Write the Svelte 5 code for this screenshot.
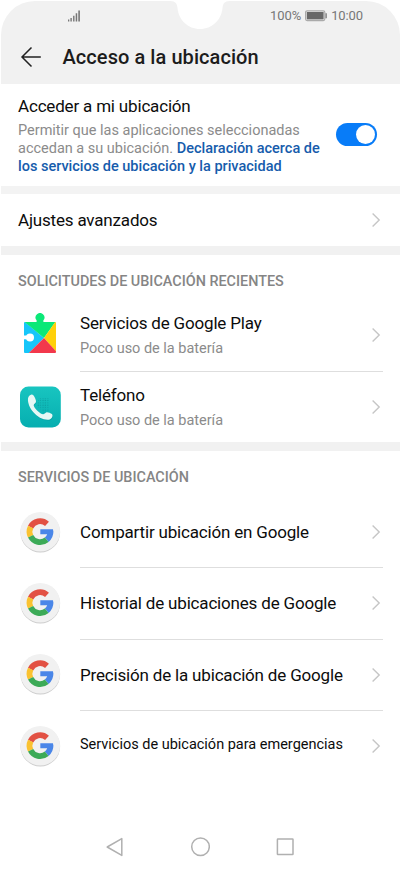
<script lang="ts">
	interface Item {
		title: string;
		note?: string;
		icon: 'play' | 'phone' | 'google';
		small?: boolean;
	}

	const recent: Item[] = [
		{ title: 'Servicios de Google Play', note: 'Poco uso de la batería', icon: 'play' },
		{ title: 'Teléfono', note: 'Poco uso de la batería', icon: 'phone' }
	];

	const services: Item[] = [
		{ title: 'Compartir ubicación en Google', icon: 'google' },
		{ title: 'Historial de ubicaciones de Google', icon: 'google' },
		{ title: 'Precisión de la ubicación de Google', icon: 'google' },
		{ title: 'Servicios de ubicación para emergencias', icon: 'google', small: true }
	];

	const handset =
		'M10 13.5c.3-2 2-3.6 3.6-3.9 1.3-.2 2 .8 2.8 2.2.9 1.6 1.6 3.4 1.6 4.6 0 1.8-2.3 2.2-2.3 3.8 0 2.6 7 9.4 9.6 9 1.7-.3 2-2 3.7-2 1.6 0 3.7.8 4.9 1.9 1.1 1 .6 2.8-.3 4-1 1.4-2.5 1.7-4 1.7-5 0-10.5-3-14.2-7.5C12 23.5 9.5 18 10 13.5z';

	let enabled = $state(true);
</script>

{#snippet chevron()}
	<svg width="10" height="16" viewBox="0 0 10 16">
		<path d="M1.6 1.5 8.2 8l-6.6 6.5" fill="none" stroke="#c6c6c6" stroke-width="1.4" />
	</svg>
{/snippet}

{#snippet icon(name: string)}
	{#if name === 'play'}
		<svg width="44" height="44" viewBox="0 0 44 44">
			<path d="M6 10q0-1 1-1l19 16-15 15H7q-1 0-1-1z" fill="#16c6fa" />
			<path d="M6.600 9h12V7.300a4.400 4.400 0 1 1 6.800 0V9h12L26 25z" fill="#0be878" />
			<path d="M37.200 9q.8 0 .8 1v28.500L26 25z" fill="#ffd00a" />
			<path d="M26 25l12 13.200V39q0 1-1 1H10.800z" fill="#f2384c" />
			<circle cx="12" cy="24.400" r="4" fill="#fff" />
			<path d="M4 22.500h7v3.800H4z" fill="#fff" />
		</svg>
	{:else if name === 'phone'}
		<svg width="44" height="44" viewBox="0 0 44 44">
			<defs>
				<linearGradient id="teal" x1="0" y1="0" x2="0" y2="1">
					<stop offset="0" stop-color="#18c5c0" />
					<stop offset="1" stop-color="#06aeb0" />
				</linearGradient>
				<pattern id="dots" width="2.4" height="2.4" patternUnits="userSpaceOnUse">
					<circle cx="1" cy="1" r="0.65" fill="#078f94" />
				</pattern>
			</defs>
			<rect x="2" y="1.5" width="40.8" height="41" rx="8.5" fill="url(#teal)" />
			<path d="M21 13h10v14l-5 1-7-7z" fill="url(#dots)" opacity="0.7" />
			<path d={handset} transform="translate(.4 .8)" fill="#047d80" opacity="0.3" />
			<path d={handset} fill="#e6f8f5" />
		</svg>
	{:else}
		<svg width="44" height="44" viewBox="0 0 44 44">
			<circle cx="22.3" cy="22.6" r="19.8" fill="#cdcdcd" />
			<circle cx="22.3" cy="21.7" r="19.8" fill="#f1f1f1" />
			<g fill="none" stroke-width="5.8">
				<path d="M12.6 17.1A10.5 10.5 0 0 1 29 13.9" stroke="#e25143" />
				<path d="M12.6 26.3a10.5 10.5 0 0 1 0-9.2" stroke="#fac230" />
				<path d="M32.4 21a10.5 10.5 0 0 1-3.7 8.7" stroke="#4a86e8" />
				<path d="M28.7 29.7a10.5 10.5 0 0 1-16.1-3.4" stroke="#3caa57" />
			</g>
			<path d="M22.3 19.3H35q.3 2.5 0 5H22.3z" fill="#4a86e8" />
		</svg>
	{/if}
{/snippet}

{#snippet list(items: Item[])}
	{#each items as item}
		<div class="row">
			<div class="icon">{@render icon(item.icon)}</div>
			<div class="body">
				<div class="text">
					<span class="title" class:small={item.small}>{item.title}</span>
					{#if item.note}
						<span class="note">{item.note}</span>
					{/if}
				</div>
				{@render chevron()}
			</div>
		</div>
	{/each}
{/snippet}

<div class="screen">
	<header>
		<svg class="notch" width="66" height="30" viewBox="0 0 66 30">
			<path d="M2 0v1c6 0 7 3 7.5 7C10.500 20 20 29 32 29s21.500-9 22.500-21c.5-4 1.500-7 7.500-7V0z" fill="#fff" />
		</svg>
		<div class="status">
			<svg width="14" height="14" viewBox="0 0 14 14" fill="#777">
				<path d="M1 10.500h1.300v2H1zM3.400 9h1.400v3.500H3.400zM6.100 6.800h1.400v5.700H6.100zM8.700 4.200h1.500v8.300H8.700zM11.300 1.500h1.600v11h-1.600z" />
			</svg>
			<div class="power">
				<span>100%</span>
				<svg width="22" height="12" viewBox="0 0 22 12">
					<rect x=".6" y=".8" width="19.2" height="9.8" rx="1.5" fill="#f1f1f1" stroke="#aaa" stroke-width="1.2" />
					<rect x="1.8" y="2" width="16.8" height="7.4" fill="#686868" />
					<path d="M20.4 3.2h1.500v5h-1.500z" fill="#888" />
				</svg>
				<span>10:00</span>
			</div>
		</div>
		<div class="bar">
			<svg width="22" height="22" viewBox="0 0 22 22" fill="none" stroke="#222" stroke-width="1.5">
				<path d="M20.8 11H1.8M11.5 1.5 2 11l9.5 9.5" />
			</svg>
			<h1>Acceso a la ubicación</h1>
		</div>
	</header>

	<section class="access">
		<div>
			<h2>Acceder a mi ubicación</h2>
			<p>
				Permitir que las aplicaciones seleccionadas<br />
				accedan a su ubicación. <b>Declaración acerca de<br />
				los servicios de ubicación y la privacidad</b>
			</p>
		</div>
		<button
			class="toggle"
			class:on={enabled}
			aria-label="Acceder a mi ubicación"
			onclick={() => (enabled = !enabled)}
		></button>
	</section>

	<section class="advanced">
		<span class="title">Ajustes avanzados</span>
		{@render chevron()}
	</section>

	<section class="group">
		<h3>SOLICITUDES DE UBICACIÓN RECIENTES</h3>
		{@render list(recent)}
	</section>

	<section class="group">
		<h3>SERVICIOS DE UBICACIÓN</h3>
		{@render list(services)}
	</section>

	<nav>
		<svg width="20" height="22" viewBox="0 0 20 22">
			<path d="M16.8 2.6v16.8L2.2 11z" />
		</svg>
		<svg width="20" height="22" viewBox="0 0 20 22">
			<circle cx="10.5" cy="10.8" r="8.8" />
		</svg>
		<svg width="20" height="22" viewBox="0 0 20 22">
			<rect x="2.4" y="3" width="15.6" height="15.6" rx=".5" />
		</svg>
	</nav>
</div>

<style>
	:global(body) {
		background: #fff;
	}

	.screen {
		display: flex;
		flex-direction: column;
		box-sizing: border-box;
		width: 401px;
		height: 870px;
		padding: 1px 1px 0;
		font-family: Roboto, sans-serif;
		color: #0c0c0c;
		background: #fff;
		overflow: hidden;
	}

	h1,
	h2,
	h3,
	p {
		margin: 0;
	}

	svg {
		display: block;
		flex: none;
	}

	header {
		position: relative;
		box-sizing: border-box;
		height: 82.5px;
		border-radius: 34px 34px 0 0;
		background: #f1f1f1;
	}

	.notch {
		position: absolute;
		left: 167px;
		top: -1px;
	}

	.status {
		display: flex;
		align-items: center;
		justify-content: space-between;
		height: 29px;
		padding: 0 37px 0 66px;
	}

	.power {
		display: flex;
		align-items: center;
		gap: 4px;
		font-size: 13px;
		letter-spacing: -0.1px;
		color: #777;
	}

	.bar {
		display: flex;
		align-items: center;
		gap: 20.5px;
		height: 54px;
		padding-left: 19px;
	}

	h1 {
		font-size: 20px;
		font-weight: 500;
		line-height: 26px;
		letter-spacing: 0.07px;
		color: #1c1c1c;
	}

	.access {
		display: flex;
		box-sizing: border-box;
		justify-content: space-between;
		height: 102.5px;
		padding: 11px 23px 0 17px;
	}

	h2 {
		font-size: 17px;
		font-weight: 400;
		line-height: 22px;
		letter-spacing: -0.18px;
	}

	p {
		padding-top: 5px;
		font-size: 14.5px;
		line-height: 18.4px;
		letter-spacing: -0.01px;
		white-space: nowrap;
		color: #8b8b8b;
	}

	b {
		font-weight: 500;
		color: #165cac;
	}

	.toggle {
		width: 41px;
		height: 23px;
		margin-top: 28px;
		padding: 2px;
		border: none;
		border-radius: 12px;
		background: #c8c8c8;
	}

	.toggle::after {
		content: '';
		display: block;
		width: 19px;
		height: 19px;
		border-radius: 50%;
		background: #fff;
	}

	.toggle.on {
		background: #087cf8;
	}

	.toggle.on::after {
		margin-left: auto;
	}

	.advanced {
		display: flex;
		box-sizing: border-box;
		align-items: center;
		justify-content: space-between;
		height: 60px;
		padding: 0 19px 0 17px;
		border-top: 8px solid #f3f3f3;
	}

	.group {
		border-top: 9px solid #f1f1f1;
	}

	h3 {
		height: 27.7px;
		padding: 17px 17px 0;
		font-size: 14.4px;
		font-weight: 500;
		line-height: 20px;
		color: #858585;
	}

	.row {
		display: flex;
		align-items: center;
		height: 71.3px;
		padding: 0 17px;
	}

	.icon {
		width: 62px;
	}

	.body {
		display: flex;
		flex: 1;
		box-sizing: border-box;
		align-items: center;
		justify-content: space-between;
		height: 100%;
		padding-right: 2px;
	}

	.row + .row .body {
		border-top: 1px solid #dedede;
	}

	.text {
		display: flex;
		flex-direction: column;
		gap: 4px;
	}

	.title {
		font-size: 17px;
		line-height: 22px;
		letter-spacing: -0.18px;
		white-space: nowrap;
	}

	.title.small {
		padding-bottom: 2px;
		font-size: 14.5px;
		letter-spacing: -0.01px;
	}

	.note {
		font-size: 14.5px;
		line-height: 21px;
		letter-spacing: -0.02px;
		color: #8b8b8b;
	}

	nav {
		display: flex;
		justify-content: space-between;
		margin-top: auto;
		padding: 0 105px 12px 104px;
		fill: none;
		stroke: #b0b0b0;
		stroke-width: 1.5;
		stroke-linejoin: round;
	}
</style>
